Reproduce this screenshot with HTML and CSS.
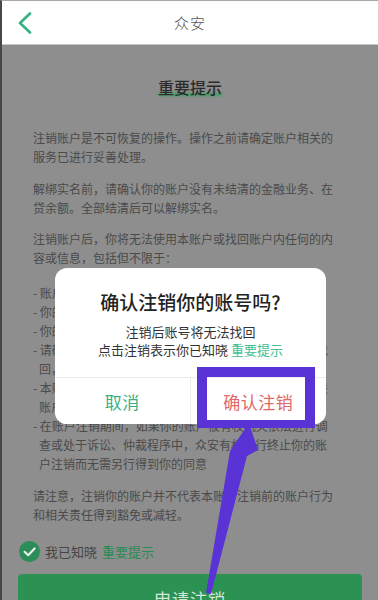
FILE: index.html
```html
<!DOCTYPE html>
<html lang="zh-CN">
<head>
<meta charset="utf-8">
<title>众安 - 注销账户</title>
<link rel="stylesheet" href="styles.css">
</head>
<body>
<div class="screen">
  <header class="topbar">
    <svg class="back" viewBox="0 0 14 22" aria-hidden="true"><polyline points="12,1.5 2,11 12,20.5" fill="none" stroke="#33b382" stroke-width="2.6" stroke-linecap="round" stroke-linejoin="round"/></svg>
    <h1 class="topbar-title">众安</h1>
    <span></span>
  </header>

  <main class="content">
    <h2 class="notice-title"><span class="notice-mark">重要提示</span></h2>
    <div class="copy">
      <p class="p-first">注销账户是不可恢复的操作。操作之前请确定账户相关的服务已进行妥善处理。</p>
      <p>解绑实名前，请确认你的账户没有未结清的金融业务、在贷余额。全部结清后可以解绑实名。</p>
      <p class="p-tight">注销账户后，你将无法使用本账户或找回账户内任何的内容或信息，包括但不限于：</p>
      <ul class="items">
        <li>- 账户信息、会员权益等</li>
        <li>- 你的交易记录</li>
        <li>- 你的保单信息</li>
        <li>- 请确保所有交易已完结且无纠纷，账户注销后将无法找回，请谨慎操作</li>
        <li>- 本账户注销后，原绑定的手机号、邮箱等将会解除关联账户</li>
        <li>- 在账户注销期间，如果你的账户被有权机关依法进行调查或处于诉讼、仲裁程序中，众安有权自行终止你的账户注销而无需另行得到你的同意</li>
      </ul>
      <p class="p-last">请注意，注销你的账户并不代表本账户注销前的账户行为和相关责任得到豁免或减轻。</p>
    </div>
    <div class="agree">
      <svg class="check" viewBox="0 0 21 21" aria-hidden="true"><circle cx="10.5" cy="10.5" r="10.5" fill="#2b8d58"/><polyline points="5.6,10.8 9.2,14.2 15.6,7.4" fill="none" stroke="#e9f3ed" stroke-width="2.2" stroke-linecap="round" stroke-linejoin="round"/></svg>
      <span>我已知晓</span>
      <a class="agree-link">重要提示</a>
    </div>
    <button class="apply">申请注销</button>
  </main>

  <div class="dialog">
    <div class="dialog-body">
      <h3 class="dialog-title">确认注销你的账号吗?</h3>
      <p class="dialog-text">注销后账号将无法找回<br>点击注销表示你已知晓 <a class="dialog-link">重要提示</a></p>
    </div>
    <div class="dialog-actions">
      <button class="btn-cancel">取消</button>
      <button class="btn-confirm">确认注销</button>
    </div>
  </div>

  <div class="callout-box"></div>
  <svg class="arrow" viewBox="0 0 378 600" aria-hidden="true"><polygon points="249,423 258,450 247,456 211,594 206,593 230,451" fill="#5a33d6"/></svg>
</div>
</body>
</html>
```

FILE: styles.css
```css
* { box-sizing: border-box; }

body {
  margin: 0;
  background: #8e8e8e;
  font-family: "Noto Sans CJK SC", "Noto Sans", sans-serif;
}

.screen {
  position: relative;
  width: 378px;
  height: 600px;
  overflow: hidden;
  background: #8e8e8e;
  border-left: 2px solid #474747;
  border-top: 1px solid #a8a8a8;
}

.topbar {
  height: 44px;
  background: #fff;
  border-bottom: 1px solid #c6c6c6;
  display: grid;
  grid-template-columns: 1fr auto 1fr;
  align-items: center;
  padding: 0 16px;
}

.back {
  width: 14px;
  height: 22px;
  display: block;
}

.topbar-title {
  margin: 0;
  font-size: 15px;
  line-height: 20px;
  font-weight: 300;
  color: #555;
  letter-spacing: 1px;
}

.content {
  padding: 30px 16px 0;
}

.notice-title {
  margin: 0;
  text-align: center;
  font-size: 16px;
  line-height: 24px;
  font-weight: 500;
  color: #2b2b2b;
}

.notice-mark {
  position: relative;
  display: inline-block;
  z-index: 0;
}

.notice-mark::after {
  content: "";
  position: absolute;
  left: 0;
  right: 0;
  bottom: 3px;
  height: 3px;
  background: #3da066;
  filter: blur(0.8px);
  z-index: -1;
}

.copy {
  padding: 0 24px 0 15px;
  font-size: 12px;
  line-height: 19px;
  color: #4a4a4a;
}

.copy p {
  margin: 13px 0 0;
}

.copy .p-first { margin-top: 29px; }
.copy .p-tight { margin-top: 12px; }

.items {
  list-style: none;
  margin: 16px 0 0;
  padding: 0 0 0 6px;
}

.items li {
  text-indent: -6px;
}

.agree {
  display: flex;
  align-items: center;
  gap: 5px;
  height: 22px;
  margin-top: 16px;
  padding-left: 1px;
  font-size: 13px;
  color: #464646;
}

.check {
  width: 21px;
  height: 21px;
  display: block;
}

.agree-link {
  color: #2a8a55;
}

.apply {
  display: block;
  width: 100%;
  height: 48px;
  margin-top: 12px;
  border: 0;
  border-radius: 4px;
  background: #2c9253;
  color: #d3e8da;
  font-family: inherit;
  font-size: 17px;
  letter-spacing: 1px;
}

.dialog {
  position: absolute;
  left: 53px;
  top: 267px;
  width: 271px;
  background: #fff;
  border-radius: 12px;
  text-align: center;
  overflow: hidden;
}

.dialog-body {
  padding: 21px 12px 18px;
}

.dialog-title {
  margin: 0;
  font-size: 19px;
  line-height: 26px;
  font-weight: 500;
  color: #222;
}

.dialog-text {
  margin: 8px 0 0;
  font-size: 13px;
  line-height: 18px;
  color: #333;
}

.dialog-link {
  color: #40c093;
}

.dialog-actions {
  display: grid;
  grid-template-columns: 1fr 1fr;
  border-top: 1px solid #ececec;
}

.dialog-actions button {
  height: 46px;
  border: 0;
  background: #fff;
  font-family: inherit;
  font-size: 17px;
  letter-spacing: 0.5px;
}

.btn-cancel {
  color: #3aae86;
  border-right: 1px solid #ececec !important;
}

.btn-confirm {
  color: #e26868;
}

.callout-box {
  position: absolute;
  left: 195px;
  top: 366px;
  width: 118px;
  height: 61px;
  border: 10px solid #5a33d6;
  border-bottom-width: 8px;
}

.arrow {
  position: absolute;
  left: -2px;
  top: -1px;
  width: 378px;
  height: 600px;
  pointer-events: none;
}
```
